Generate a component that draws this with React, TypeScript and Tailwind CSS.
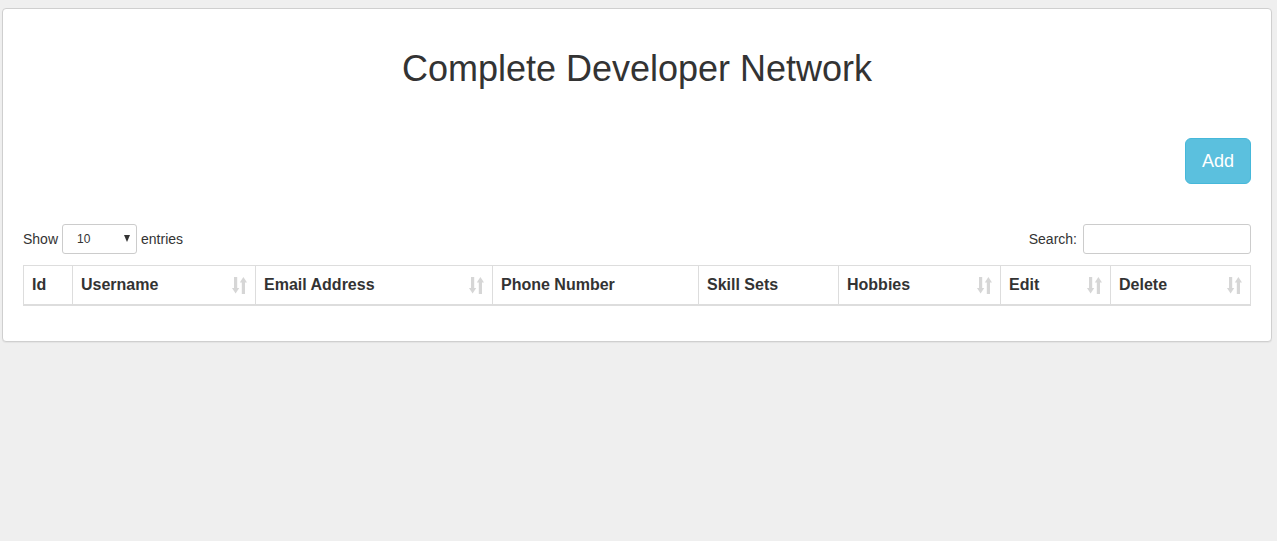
import React from 'react';

const columns = [
  { label: 'Id', width: 48, sort: false },
  { label: 'Username', width: 183, sort: true },
  { label: 'Email Address', width: 237, sort: true },
  { label: 'Phone Number', width: 206, sort: false },
  { label: 'Skill Sets', width: 140, sort: false },
  { label: 'Hobbies', width: 162, sort: true },
  { label: 'Edit', width: 110, sort: true },
  { label: 'Delete', width: 140, sort: true },
];

function SortIcon() {
  return (
    <svg width="15" height="17" viewBox="0 0 15 17" className="shrink-0">
      <g fill="#d6d6d6">
        <rect x="2" y="0" width="3.2" height="12" />
        <polygon points="0,11 7.2,11 3.6,16.5" />
        <polygon points="7.8,5.5 15,5.5 11.4,0" />
        <rect x="9.8" y="5" width="3.2" height="12" />
      </g>
    </svg>
  );
}

function App() {
  return (
    <div className="min-h-screen bg-[#efefef] pt-[8px] pl-[2px] font-['Liberation_Sans',Arial,sans-serif] text-[#333]">
      <div className="w-[1270px] rounded-[4px] border border-[#cfcfcf] bg-white px-[20px] pt-[40px] pb-[35px] shadow-[0_1px_1px_rgba(0,0,0,0.05)]">
        {/* Header */}
        <h1 className="text-center text-[36px] leading-[40px]">Complete Developer Network</h1>

        <div className="mt-[49px] flex justify-end">
          <button className="h-[46px] w-[66px] rounded-[6px] border border-[#46b8da] bg-[#5bc0de] text-[18px] text-white">
            Add
          </button>
        </div>

        {/* Controls */}
        <div className="mt-[40px] flex items-center justify-between text-[14px]">
          <div className="flex items-center">
            <span>Show</span>
            <div className="relative ml-[4px] mr-[4px]">
              <select className="h-[30px] w-[75px] appearance-none rounded-[3px] border border-[#ccc] bg-white pl-[14px] text-[12px] text-[#333] outline-none">
                <option>10</option>
                <option>25</option>
                <option>50</option>
                <option>100</option>
              </select>
              <span className="pointer-events-none absolute right-[7px] top-[11px] h-0 w-0 border-x-[3.5px] border-t-[7px] border-x-transparent border-t-[#333]" />
            </div>
            <span>entries</span>
          </div>
          <div className="flex items-center">
            <span>Search:</span>
            <input className="ml-[6px] h-[30px] w-[168px] rounded-[3px] border border-[#ccc] outline-none" />
          </div>
        </div>

        {/* Table */}
        <div className="mt-[11px] border border-b-0 border-[#ddd]">
          <div className="flex border-b-2 border-[#ddd]">
            {columns.map((c, i) => (
              <div
                key={c.label}
                style={{ width: c.width }}
                className={
                  'flex h-[38px] items-center justify-between px-[8px] text-[16px] font-bold ' +
                  (i > 0 ? 'border-l border-[#ddd]' : '')
                }
              >
                <span>{c.label}</span>
                {c.sort && <SortIcon />}
              </div>
            ))}
          </div>
        </div>
      </div>
    </div>
  );
}

export default App;
